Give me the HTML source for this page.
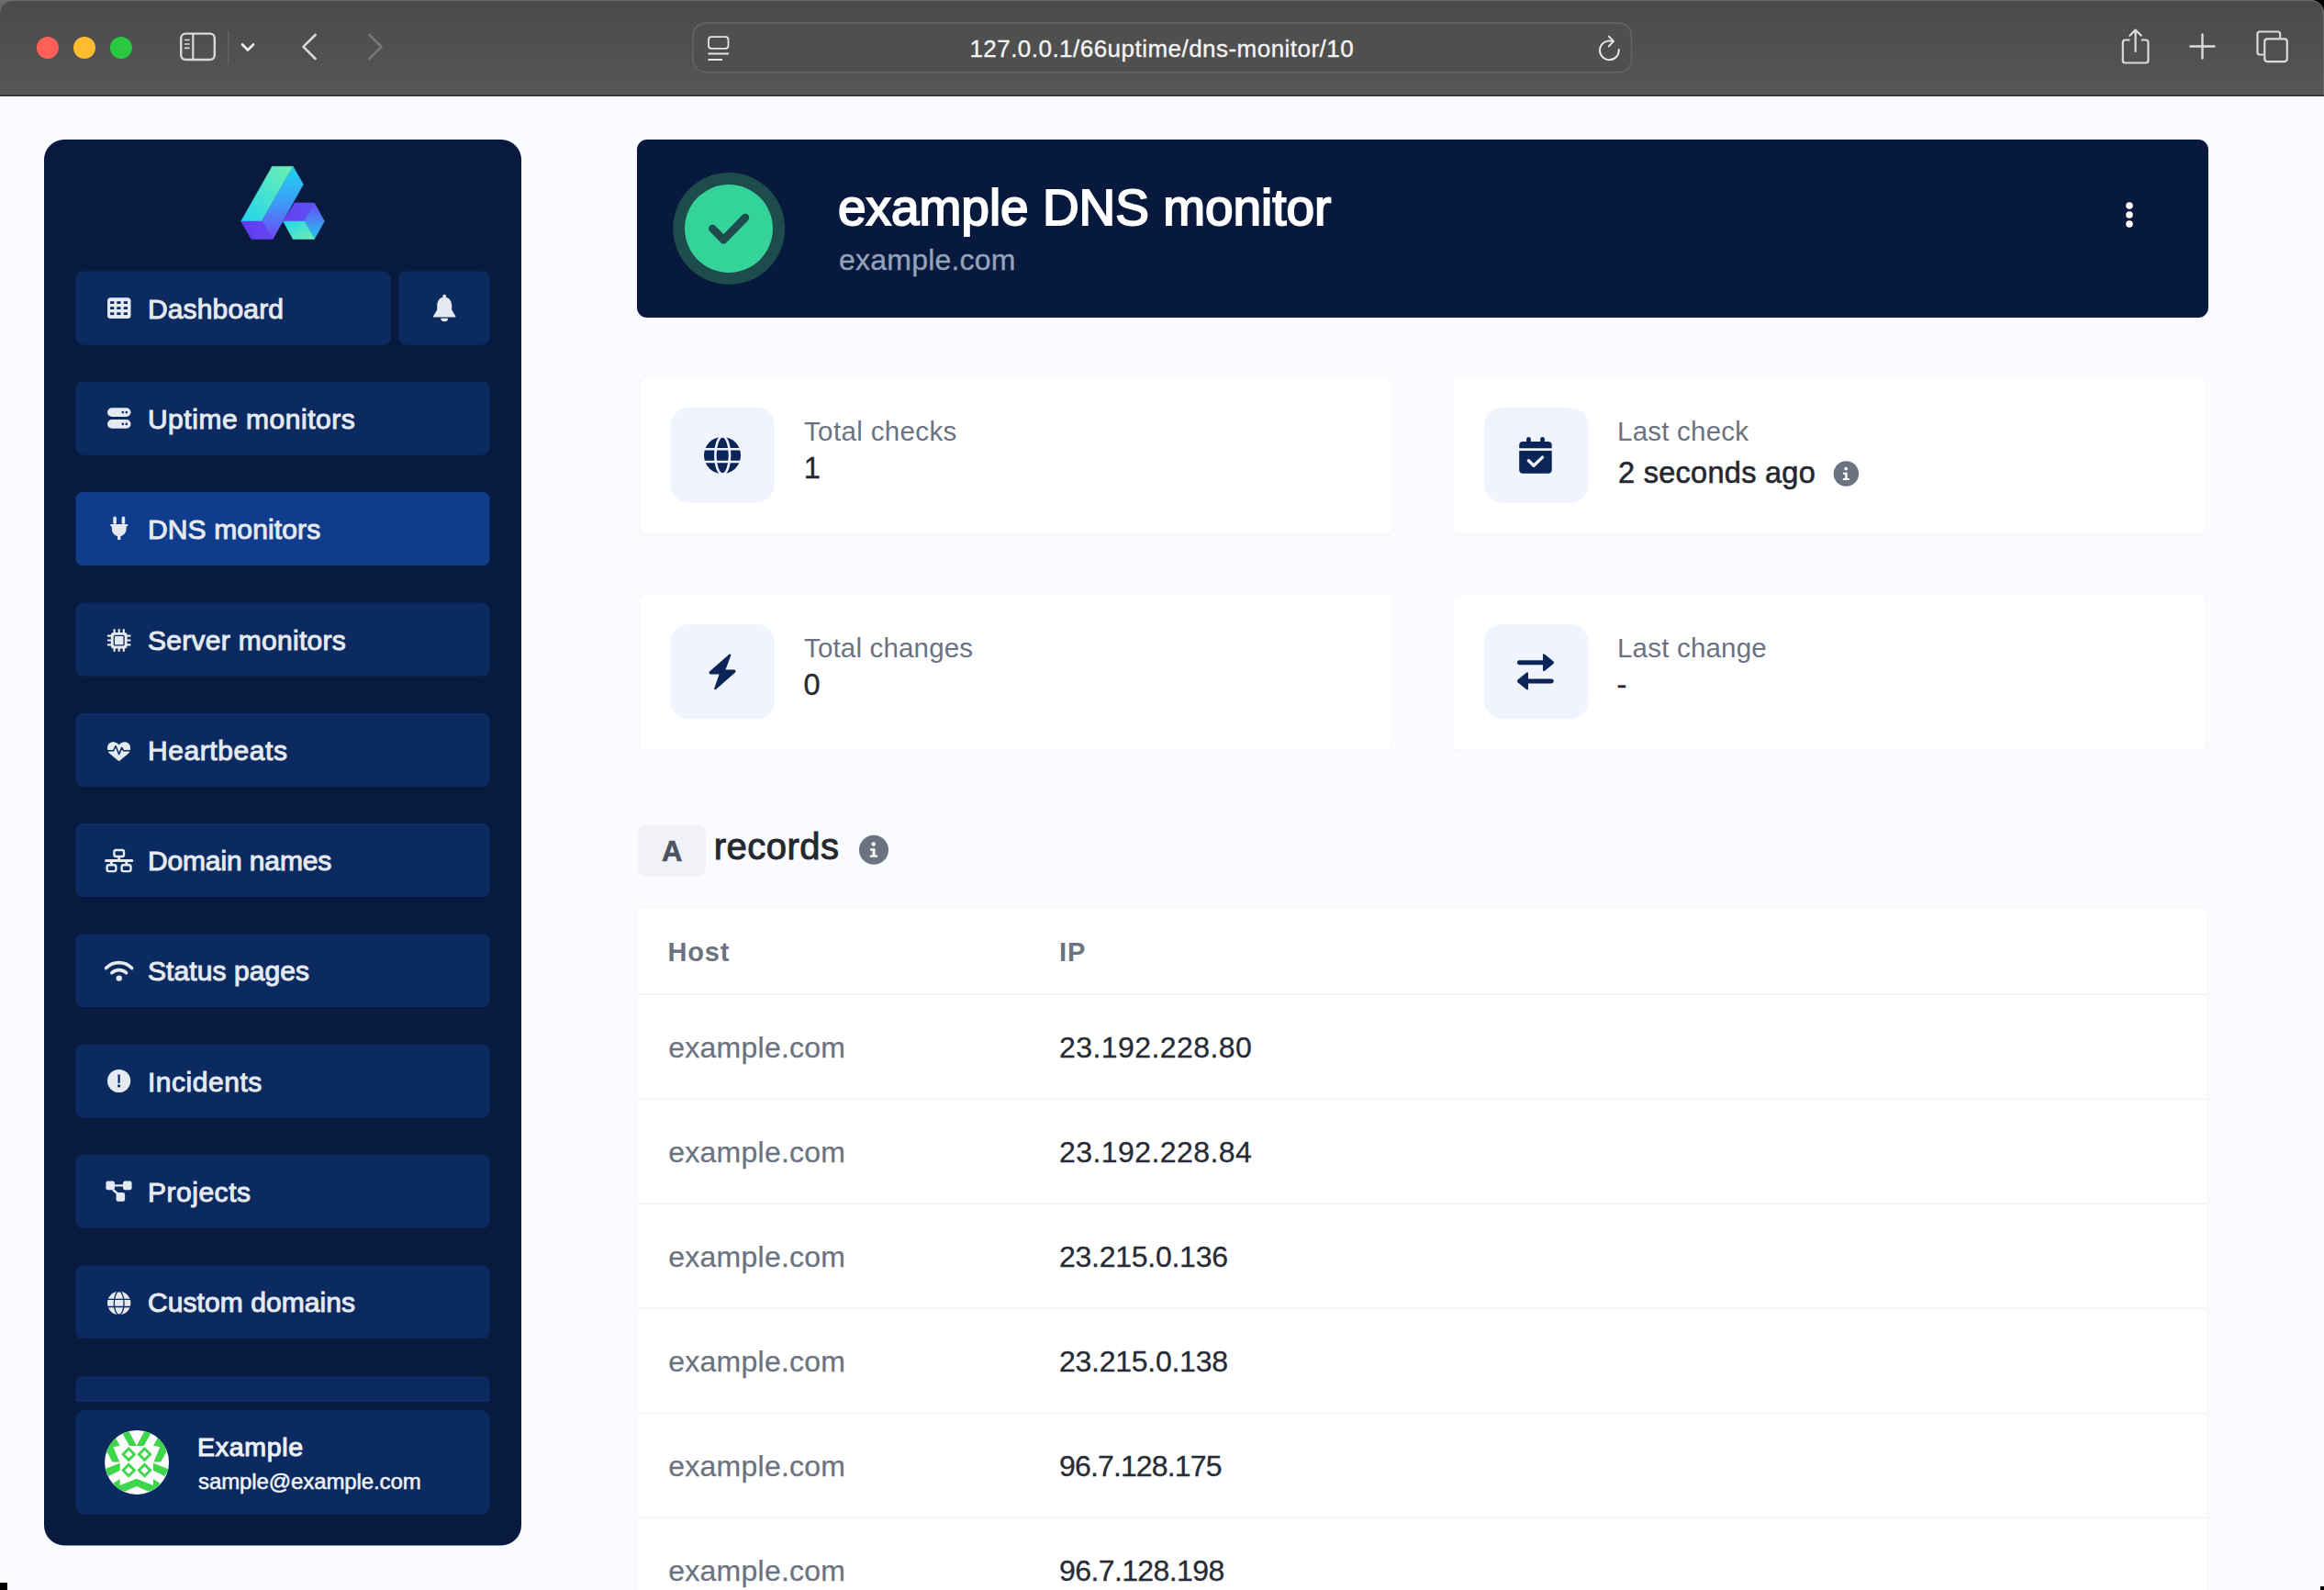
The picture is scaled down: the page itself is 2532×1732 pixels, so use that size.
<!DOCTYPE html>
<html><head><meta charset="utf-8"><title>example DNS monitor</title>
<style>
html,body{margin:0;padding:0;width:2532px;height:1732px;overflow:hidden;background:#fafbfe}
.ov{position:absolute;left:0;top:0}
.t{position:absolute;white-space:nowrap;font-family:"Liberation Sans", sans-serif}
</style></head><body>
<svg class="ov" width="2532" height="1732" viewBox="0 0 2532 1732"><defs><linearGradient id="tb" x1="0" y1="0" x2="0" y2="1"><stop offset="0" stop-color="#4a4a4a"/><stop offset="1" stop-color="#565656"/></linearGradient><linearGradient id="lg1" x1="0" y1="1" x2="1" y2="0"><stop offset="0" stop-color="#22d3ee"/><stop offset="1" stop-color="#6ef0b0"/></linearGradient><linearGradient id="lg2" x1="0" y1="0" x2="0" y2="1"><stop offset="0" stop-color="#22d3ee"/><stop offset="0.5" stop-color="#3b9cf6"/><stop offset="1" stop-color="#7047f5"/></linearGradient><linearGradient id="lg3" x1="0" y1="0" x2="1" y2="0"><stop offset="0" stop-color="#5b3cf0"/><stop offset="1" stop-color="#6a44f6"/></linearGradient><linearGradient id="lg4" x1="0" y1="0" x2="1" y2="0"><stop offset="0" stop-color="#6a3ef2"/><stop offset="1" stop-color="#5a52f4"/></linearGradient><linearGradient id="lg5" x1="0" y1="0" x2="0" y2="1"><stop offset="0" stop-color="#6a4af6"/><stop offset="1" stop-color="#22c8ee"/></linearGradient><linearGradient id="lg6" x1="0" y1="0" x2="1" y2="1"><stop offset="0" stop-color="#22d3ee"/><stop offset="1" stop-color="#6ef0b0"/></linearGradient><clipPath id="avc"><circle cx="149.1" cy="1592.9" r="35"/></clipPath></defs><rect x="0" y="0" width="2532" height="104" fill="#6a6a6a"/><path d="M0,104 V16 Q0,1 16,1 H2516 Q2531,1 2531,16 V104 Z" fill="url(#tb)"/><path d="M2520,0 H2532 V12 Q2530,2 2520,0 Z" fill="#000"/><rect x="0" y="102.5" width="2532" height="1.2" fill="#5c5c5c"/><rect x="0" y="103.7" width="2532" height="1.2" fill="#000"/><circle cx="51.9" cy="51.9" r="12" fill="#fe5f57"/><circle cx="92" cy="51.9" r="12" fill="#febc2e"/><circle cx="131.9" cy="51.9" r="12" fill="#28c840"/><rect x="197.2" y="36.6" width="36.6" height="28.4" rx="5" fill="none" stroke="#d8d8d8" stroke-width="2.4"/><line x1="210.3" y1="37" x2="210.3" y2="65" stroke="#d8d8d8" stroke-width="2.2"/><path d="M201.6,43.5 H206 M201.6,48 H206 M201.6,52.4 H206" stroke="#d8d8d8" stroke-width="1.7" stroke-linecap="round"/><line x1="248.9" y1="34" x2="248.9" y2="70.6" stroke="#656565" stroke-width="1.3"/><path d="M264,48.5 L270,54.5 L276,48.5" fill="none" stroke="#f0f0f0" stroke-width="2.6" stroke-linecap="round" stroke-linejoin="round"/><path d="M343.6,38 L330.4,50.9 L343.6,64" fill="none" stroke="#d8d8d8" stroke-width="2.6" stroke-linecap="round" stroke-linejoin="round"/><path d="M402.4,38 L415.6,51 L402.4,64" fill="none" stroke="#777" stroke-width="2.6" stroke-linecap="round" stroke-linejoin="round"/><rect x="755" y="25" width="1022.5" height="53.8" rx="14" fill="#4f4f4f" stroke="#656565" stroke-width="1.5"/><rect x="772" y="40.2" width="21.5" height="12.6" rx="3" fill="none" stroke="#e6e6e6" stroke-width="1.8"/><path d="M771.5,58.5 H794 M771.5,65 H787" stroke="#e6e6e6" stroke-width="1.8"/><path d="M1763.7,53.9 A10.36,10.36 0 1,1 1756.4,44.9" fill="none" stroke="#e8e8e8" stroke-width="2" stroke-linecap="round"/><path d="M1752.8,39.6 L1758,44.9 L1752.8,50.4" fill="none" stroke="#e8e8e8" stroke-width="2" stroke-linecap="round" stroke-linejoin="round"/><path d="M2320.5,43.5 H2315.5 Q2312.8,43.5 2312.8,46.2 V66 Q2312.8,68.5 2315.5,68.5 H2337.8 Q2340.5,68.5 2340.5,66 V46.2 Q2340.5,43.5 2337.8,43.5 H2332.8" fill="none" stroke="#dcdcdc" stroke-width="2.2"/><path d="M2326.6,56 V33 M2320.5,38.8 L2326.6,32.6 L2332.8,38.8" fill="none" stroke="#dcdcdc" stroke-width="2.2" stroke-linecap="round" stroke-linejoin="round"/><path d="M2399.5,37.5 V63.5 M2386.5,50.5 H2412.5" stroke="#dcdcdc" stroke-width="2.4" stroke-linecap="round"/><path d="M2466.3,59.5 H2462 Q2459.5,59.5 2459.5,57 V37 Q2459.5,34.5 2462,34.5 H2481.5 Q2484.2,34.5 2484.2,37 V41.2" fill="none" stroke="#dcdcdc" stroke-width="2.2"/><rect x="2467.3" y="42.3" width="24.5" height="24.8" rx="3" fill="none" stroke="#dcdcdc" stroke-width="2.2"/><rect x="0" y="104.9" width="2532" height="1628" fill="#fafbfe"/><path d="M0,1724 H8 V1732 H0 Z" fill="#000"/><path d="M2528,1728 H2532 V1732 H2528 Z" fill="#000"/><rect x="48" y="152" width="520" height="1531.5" rx="22" fill="#081a3e"/><polygon points="296.5,181.3 319.2,181.3 285.2,241.1 262.6,241.1" fill="url(#lg1)" stroke="url(#lg1)" stroke-width="0.5" stroke-linejoin="round"/><polygon points="319.2,181.3 330.5,200.8 297.2,260.6 285.2,241.1" fill="url(#lg2)" stroke="url(#lg2)" stroke-width="0.5" stroke-linejoin="round"/><polygon points="262.6,241.1 285.2,241.1 297.2,260.6 273.9,260.6" fill="url(#lg3)" stroke="url(#lg3)" stroke-width="0.5" stroke-linejoin="round"/><polygon points="321.1,221 342.5,221 331.5,241.1 308.5,241.1" fill="url(#lg4)" stroke="url(#lg4)" stroke-width="0.5" stroke-linejoin="round"/><polygon points="342.5,221 353.5,241.1 342.5,260.6 331.5,241.1" fill="url(#lg5)" stroke="url(#lg5)" stroke-width="0.5" stroke-linejoin="round"/><polygon points="308.5,241.1 331.5,241.1 342.5,260.6 319.2,260.6" fill="url(#lg6)" stroke="url(#lg6)" stroke-width="0.5" stroke-linejoin="round"/><rect x="82.5" y="295.5" width="343.2" height="80.3" rx="7.5" fill="#0a2a60"/><rect x="434.3" y="295.5" width="99.3" height="80.3" rx="7.5" fill="#0a2a60"/><rect x="82.5" y="415.8" width="451" height="80" rx="7.5" fill="#0a2a60"/><rect x="82.5" y="536.1" width="451" height="80" rx="7.5" fill="#0f3c8b"/><rect x="82.5" y="656.4" width="451" height="80" rx="7.5" fill="#0a2a60"/><rect x="82.5" y="776.7" width="451" height="80" rx="7.5" fill="#0a2a60"/><rect x="82.5" y="897.0" width="451" height="80" rx="7.5" fill="#0a2a60"/><rect x="82.5" y="1017.3" width="451" height="80" rx="7.5" fill="#0a2a60"/><rect x="82.5" y="1137.6" width="451" height="80" rx="7.5" fill="#0a2a60"/><rect x="82.5" y="1257.9" width="451" height="80" rx="7.5" fill="#0a2a60"/><rect x="82.5" y="1378.2" width="451" height="80" rx="7.5" fill="#0a2a60"/><path d="M82.5,1527.3 V1508.2 Q82.5,1499.2 91.5,1499.2 H524.5 Q533.5,1499.2 533.5,1508.2 V1527.3 Z" fill="#0a2a60"/><rect x="82.5" y="1536" width="451" height="114" rx="10" fill="#0a2a60"/><rect x="117" y="324.2" width="25.5" height="22.8" rx="3.5" fill="#e5e9f0"/><rect x="120.1" y="328.2" width="4.2" height="2.8" fill="#0a2a60"/><rect x="120.1" y="334.2" width="4.2" height="2.8" fill="#0a2a60"/><rect x="120.1" y="340.3" width="4.2" height="2.8" fill="#0a2a60"/><rect x="127.3" y="328.2" width="4.2" height="2.8" fill="#0a2a60"/><rect x="127.3" y="334.2" width="4.2" height="2.8" fill="#0a2a60"/><rect x="127.3" y="340.3" width="4.2" height="2.8" fill="#0a2a60"/><rect x="134.8" y="328.2" width="4.2" height="2.8" fill="#0a2a60"/><rect x="134.8" y="334.2" width="4.2" height="2.8" fill="#0a2a60"/><rect x="134.8" y="340.3" width="4.2" height="2.8" fill="#0a2a60"/><rect x="117" y="444.2" width="25.5" height="9.8" rx="4.9" fill="#e5e9f0"/><rect x="117" y="457" width="25.5" height="9.8" rx="4.9" fill="#e5e9f0"/><circle cx="133.8" cy="449.1" r="1.3" fill="#0a2a60"/><circle cx="137.8" cy="449.1" r="1.3" fill="#0a2a60"/><circle cx="133.8" cy="461.9" r="1.3" fill="#0a2a60"/><circle cx="137.8" cy="461.9" r="1.3" fill="#0a2a60"/><rect x="123.3" y="562.6" width="3.6" height="8.5" rx="1.8" fill="#e5e9f0"/><rect x="132.6" y="562.6" width="3.6" height="8.5" rx="1.8" fill="#e5e9f0"/><path d="M121,571 H138.5 Q139.8,571 139.3,572.5 L137.6,574 V576.5 Q137.3,582.5 131.3,584.2 V588 H128.1 V584.2 Q122.1,582.5 121.9,576.5 V574 L120.2,572.5 Q119.7,571 121,571 Z" fill="#e5e9f0"/><rect x="120.8" y="689" width="17.8" height="17.6" rx="3" fill="#e5e9f0"/><rect x="123.5" y="685" width="2.2" height="5" rx="1" fill="#e5e9f0"/><rect x="123.5" y="705.5" width="2.2" height="4.6" rx="1" fill="#e5e9f0"/><rect x="128.6" y="685" width="2.2" height="5" rx="1" fill="#e5e9f0"/><rect x="128.6" y="705.5" width="2.2" height="4.6" rx="1" fill="#e5e9f0"/><rect x="133.7" y="685" width="2.2" height="5" rx="1" fill="#e5e9f0"/><rect x="133.7" y="705.5" width="2.2" height="4.6" rx="1" fill="#e5e9f0"/><rect x="116.8" y="691.5" width="5" height="2.2" rx="1" fill="#e5e9f0"/><rect x="137.6" y="691.5" width="5" height="2.2" rx="1" fill="#e5e9f0"/><rect x="116.8" y="696.4" width="5" height="2.2" rx="1" fill="#e5e9f0"/><rect x="137.6" y="696.4" width="5" height="2.2" rx="1" fill="#e5e9f0"/><rect x="116.8" y="701.3" width="5" height="2.2" rx="1" fill="#e5e9f0"/><rect x="137.6" y="701.3" width="5" height="2.2" rx="1" fill="#e5e9f0"/><rect x="124.3" y="692.3" width="10.8" height="10.6" rx="1.2" fill="#e5e9f0" stroke="#0a2a60" stroke-width="1.3"/><path d="M129.6,811.6 C127.3,806.9 117,806 117,815.2 C117,817.4 117.9,819.4 119.5,820.9 L129.6,829.2 L139.7,820.9 C141.3,819.4 142.1,817.4 142.1,815.2 C142.1,806 131.9,806.9 129.6,811.6 Z" fill="#e5e9f0"/><path d="M116.5,817.7 H123.6 L126.1,812.7 L129.6,821.6 L132.7,814.4 L134.6,817.7 H142.5" fill="none" stroke="#0a2a60" stroke-width="1.5" stroke-linejoin="round"/><rect x="124.4" y="926" width="10.6" height="7" rx="2" fill="none" stroke="#e5e9f0" stroke-width="2.4"/><rect x="128.4" y="933" width="2.6" height="4" fill="#e5e9f0"/><rect x="114" y="936" width="31.3" height="3" rx="1.5" fill="#e5e9f0"/><rect x="119.9" y="938" width="2.9" height="4" fill="#e5e9f0"/><rect x="136.4" y="938" width="2.9" height="4" fill="#e5e9f0"/><rect x="116.6" y="942.2" width="9.8" height="6.9" rx="2" fill="none" stroke="#e5e9f0" stroke-width="2.4"/><rect x="132.6" y="942.2" width="9.9" height="6.9" rx="2" fill="none" stroke="#e5e9f0" stroke-width="2.4"/><path d="M115.6,1054.6 A19.5,19.5 0 0,1 143.6,1054.6" fill="none" stroke="#e5e9f0" stroke-width="3.6" stroke-linecap="round"/><path d="M121.8,1059.8 A11.5,11.5 0 0,1 137.6,1059.8" fill="none" stroke="#e5e9f0" stroke-width="3.6" stroke-linecap="round"/><circle cx="129.7" cy="1065.6" r="3.2" fill="#e5e9f0"/><circle cx="129.6" cy="1177.5" r="12.6" fill="#e5e9f0"/><path d="M129.6,1171.5 V1179" stroke="#0a2a60" stroke-width="2.3" stroke-linecap="round"/><circle cx="129.6" cy="1182.9" r="1.55" fill="#0a2a60"/><path d="M124,1291.4 H135 M123,1296 L128.5,1300.5" stroke="#e5e9f0" stroke-width="2.4"/><rect x="115.4" y="1286.6" width="9.6" height="9.6" rx="2.2" fill="#e5e9f0"/><rect x="134" y="1286.6" width="9.6" height="9.6" rx="2.2" fill="#e5e9f0"/><rect x="126.5" y="1299" width="9.6" height="9.8" rx="2.2" fill="#e5e9f0"/><circle cx="129.7" cy="1419.4" r="12.7" fill="#e5e9f0"/><ellipse cx="129.7" cy="1419.4" rx="5.4" ry="12.7" fill="none" stroke="#0a2a60" stroke-width="1.3"/><path d="M116,1415.3 H143.5 M116,1423.5 H143.5" stroke="#0a2a60" stroke-width="1.3"/><circle cx="484.2" cy="322.6" r="1.9" fill="#e5e9f0"/><path d="M484.2,323.6 C478.6,323.6 476.2,328.8 476.2,333 V337.5 L472,344.6 Q471.5,345.6 472.6,345.6 H495.8 Q496.9,345.6 496.4,344.6 L492.2,337.5 V333 C492.2,328.8 489.8,323.6 484.2,323.6 Z" fill="#e5e9f0"/><path d="M480.2,346.8 A4,3.4 0 0,0 488.2,346.8 Z" fill="#e5e9f0"/><g clip-path="url(#avc)"><g transform="translate(108,1552) scale(0.051572)"><rect x="0" y="0" width="1590" height="1590" fill="#fff"/><polygon points="457,122 620,122 792,445 640,445" fill="#3ed64b"/><polygon points="1127,122 964,122 792,445 944,445" fill="#3ed64b"/><polygon points="300,200 440,440 300,470 430,785 280,785 110,470" fill="#3ed64b"/><polygon points="1284,200 1144,440 1284,470 1154,785 1304,785 1474,470" fill="#3ed64b"/><polygon points="440,810 440,965 200,1085 110,940" fill="#3ed64b"/><polygon points="1144,810 1144,965 1384,1085 1474,940" fill="#3ed64b"/><polygon points="300,1230 440,1150 440,1280 792,1140 1144,1280 1144,1150 1284,1230 1250,1340 1040,1410 792,1300 544,1410 334,1340" fill="#3ed64b"/><polygon points="467,625 625,467 783,625 625,783" fill="#3ed64b"/><polygon points="545,625 625,545 705,625 625,705" fill="#fff"/><polygon points="802,625 960,467 1118,625 960,783" fill="#3ed64b"/><polygon points="880,625 960,545 1040,625 960,705" fill="#fff"/><polygon points="467,960 625,802 783,960 625,1118" fill="#3ed64b"/><polygon points="545,960 625,880 705,960 625,1040" fill="#fff"/><polygon points="802,960 960,802 1118,960 960,1118" fill="#3ed64b"/><polygon points="880,960 960,880 1040,960 960,1040" fill="#fff"/></g></g><rect x="694" y="152" width="1712" height="194" rx="11" fill="#08193e"/><circle cx="794.2" cy="249" r="61" fill="#1e4b4b"/><circle cx="794" cy="249" r="48" fill="#34d399"/><path d="M776.3,249 L788.3,261.3 L812,237" fill="none" stroke="#1e4b4b" stroke-width="8.6" stroke-linecap="round" stroke-linejoin="round"/><circle cx="2320" cy="224" r="3.8" fill="#fff"/><circle cx="2320" cy="234" r="3.8" fill="#fff"/><circle cx="2320" cy="244" r="3.8" fill="#fff"/><rect x="696.0" y="411.1" width="821.9" height="172.9" rx="7" fill="#f7f8fb"/><rect x="697.5" y="412.6" width="818.9" height="167.9" rx="5.5" fill="#ffffff"/><rect x="730.5" y="443.8" width="113.5" height="103.6" rx="20" fill="#eff4fe"/><rect x="1582.5" y="411.1" width="821.9" height="172.9" rx="7" fill="#f7f8fb"/><rect x="1584" y="412.6" width="818.9" height="167.9" rx="5.5" fill="#ffffff"/><rect x="1617" y="443.8" width="113.5" height="103.6" rx="20" fill="#eff4fe"/><rect x="696.0" y="647.0" width="821.9" height="172.9" rx="7" fill="#f7f8fb"/><rect x="697.5" y="648.5" width="818.9" height="167.9" rx="5.5" fill="#ffffff"/><rect x="730.5" y="679.7" width="113.5" height="103.6" rx="20" fill="#eff4fe"/><rect x="1582.5" y="647.0" width="821.9" height="172.9" rx="7" fill="#f7f8fb"/><rect x="1584" y="648.5" width="818.9" height="167.9" rx="5.5" fill="#ffffff"/><rect x="1617" y="679.7" width="113.5" height="103.6" rx="20" fill="#eff4fe"/><circle cx="787" cy="496" r="20" fill="#0b2559"/><ellipse cx="787.2" cy="496" rx="7.9" ry="20.5" fill="none" stroke="#eff4fe" stroke-width="2.6"/><path d="M765,489.3 H809 M765,503 H809" stroke="#eff4fe" stroke-width="2.6"/><rect x="1663.1" y="476" width="4.7" height="9" rx="2.35" fill="#0b2559"/><rect x="1678.2" y="476" width="4.7" height="9" rx="2.35" fill="#0b2559"/><path d="M1655.2,488.3 V485 Q1655.2,480.9 1659.3,480.9 H1686.6 Q1690.7,480.9 1690.7,485 V488.3 Z" fill="#0b2559"/><path d="M1655.2,491.1 H1690.7 V511.7 Q1690.7,515.8 1686.6,515.8 H1659.3 Q1655.2,515.8 1655.2,511.7 Z" fill="#0b2559"/><path d="M1665.4,501.8 L1671,507.3 L1680.5,498.1" fill="none" stroke="#eff4fe" stroke-width="3.4" stroke-linecap="round" stroke-linejoin="round"/><path d="M794.7,712.6 Q796.5,712 796.3,714 L790.5,729.6 H800 Q802.5,730.3 801,732.5 L780,751 Q777.6,752 778.3,749.5 L783.6,734.4 H774.2 Q771.5,733.6 773,731.5 Z" fill="#0b2559"/><path d="M1655.3,721.8 H1683 M1690.3,742 H1664" stroke="#0b2559" stroke-width="4.9" stroke-linecap="round"/><path d="M1681,713.5 Q1681,711.5 1683,712.8 L1692.5,720.5 Q1693.5,721.8 1692.5,723.1 L1683,730.8 Q1681,732 1681,730 Z" fill="#0b2559"/><path d="M1665,733.5 Q1665,731.5 1663,732.8 L1653.5,740.5 Q1652.5,741.9 1653.5,743.2 L1663,750.9 Q1665,752.2 1665,750 Z" fill="#0b2559"/><circle cx="2011.4" cy="516" r="13.75" fill="#6b7280"/><circle cx="2011.20" cy="510.60" r="1.90" fill="#fff"/><path d="M2008.10,514.80 H2012.70 V521.00 H2014.90 V523.00 H2007.90 V521.00 H2010.20 V516.80 H2008.10 Z" fill="#fff"/><circle cx="952" cy="925.7" r="16" fill="#6b7280"/><circle cx="951.77" cy="919.42" r="2.21" fill="#fff"/><path d="M948.16,924.30 H953.51 V931.52 H956.07 V933.85 H947.93 V931.52 H950.60 V926.63 H948.16 Z" fill="#fff"/><rect x="694.5" y="898.2" width="74.5" height="56.4" rx="9" fill="#f1f2f5"/><rect x="693" y="987.5" width="1712.5" height="760" rx="7" fill="#f7f8fb"/><rect x="694.5" y="989" width="1709.5" height="760" rx="5.5" fill="#ffffff"/><rect x="695" y="1082.4" width="1709" height="1.6" fill="#f2f3f5"/><rect x="695" y="1196.4" width="1709" height="1.6" fill="#f2f3f5"/><rect x="695" y="1310.5" width="1709" height="1.6" fill="#f2f3f5"/><rect x="695" y="1424.5" width="1709" height="1.6" fill="#f2f3f5"/><rect x="695" y="1538.6" width="1709" height="1.6" fill="#f2f3f5"/><rect x="695" y="1652.6" width="1709" height="1.6" fill="#f2f3f5"/></svg>
<div class="t" style="left:1056.4px;top:39.6px;font-size:26px;line-height:26px;font-weight:400;color:#f4f4f4;letter-spacing:0.47px;-webkit-text-stroke:0.35px #f4f4f4">127.0.0.1/66uptime/dns-monitor/10</div><div class="t" style="left:160.9px;top:321.6px;font-size:30px;line-height:30px;font-weight:400;color:#e5e9f0;letter-spacing:0.17px;-webkit-text-stroke:1.0px #e5e9f0">Dashboard</div><div class="t" style="left:160.9px;top:441.9px;font-size:30px;line-height:30px;font-weight:400;color:#e5e9f0;letter-spacing:0.54px;-webkit-text-stroke:1.0px #e5e9f0">Uptime monitors</div><div class="t" style="left:160.9px;top:562.2px;font-size:30px;line-height:30px;font-weight:400;color:#e5e9f0;letter-spacing:0.15px;-webkit-text-stroke:1.0px #e5e9f0">DNS monitors</div><div class="t" style="left:160.9px;top:682.5px;font-size:30px;line-height:30px;font-weight:400;color:#e5e9f0;letter-spacing:0.30px;-webkit-text-stroke:1.0px #e5e9f0">Server monitors</div><div class="t" style="left:160.9px;top:802.8px;font-size:30px;line-height:30px;font-weight:400;color:#e5e9f0;letter-spacing:0.59px;-webkit-text-stroke:1.0px #e5e9f0">Heartbeats</div><div class="t" style="left:160.9px;top:923.1px;font-size:30px;line-height:30px;font-weight:400;color:#e5e9f0;letter-spacing:-0.12px;-webkit-text-stroke:1.0px #e5e9f0">Domain names</div><div class="t" style="left:160.9px;top:1043.4px;font-size:30px;line-height:30px;font-weight:400;color:#e5e9f0;letter-spacing:0.10px;-webkit-text-stroke:1.0px #e5e9f0">Status pages</div><div class="t" style="left:160.9px;top:1163.7px;font-size:30px;line-height:30px;font-weight:400;color:#e5e9f0;letter-spacing:0.54px;-webkit-text-stroke:1.0px #e5e9f0">Incidents</div><div class="t" style="left:160.9px;top:1284.0px;font-size:30px;line-height:30px;font-weight:400;color:#e5e9f0;letter-spacing:0.54px;-webkit-text-stroke:1.0px #e5e9f0">Projects</div><div class="t" style="left:160.9px;top:1404.3px;font-size:30px;line-height:30px;font-weight:400;color:#e5e9f0;letter-spacing:0.08px;-webkit-text-stroke:1.0px #e5e9f0">Custom domains</div><div class="t" style="left:215.0px;top:1562.4px;font-size:28.5px;line-height:28.5px;font-weight:400;color:#eef1f6;letter-spacing:0.70px;-webkit-text-stroke:1.1px #eef1f6">Example</div><div class="t" style="left:216.0px;top:1602.2px;font-size:24px;line-height:24px;font-weight:400;color:#eef1f6;letter-spacing:-0.10px;-webkit-text-stroke:0.55px #eef1f6">sample@example.com</div><div class="t" style="left:913.0px;top:198.9px;font-size:55px;line-height:55px;font-weight:400;color:#ffffff;letter-spacing:-0.03px;-webkit-text-stroke:1.9px #ffffff">example DNS monitor</div><div class="t" style="left:914.0px;top:266.9px;font-size:32px;line-height:32px;font-weight:400;color:#94a3b8;letter-spacing:0.22px;-webkit-text-stroke:0.35px #94a3b8">example.com</div><div class="t" style="left:876.0px;top:455.0px;font-size:29.5px;line-height:29.5px;font-weight:400;color:#6b7280;letter-spacing:0.36px">Total checks</div><div class="t" style="left:875.7px;top:494.4px;font-size:32.5px;line-height:32.5px;font-weight:400;color:#25282e;letter-spacing:0.00px;-webkit-text-stroke:0.4px #25282e">1</div><div class="t" style="left:1762.0px;top:454.6px;font-size:29.5px;line-height:29.5px;font-weight:400;color:#6b7280;letter-spacing:0.22px">Last check</div><div class="t" style="left:1763.0px;top:499.0px;font-size:32.5px;line-height:32.5px;font-weight:400;color:#25282e;letter-spacing:0.28px;-webkit-text-stroke:0.6px #25282e">2 seconds ago</div><div class="t" style="left:876.0px;top:691.0px;font-size:29.5px;line-height:29.5px;font-weight:400;color:#6b7280;letter-spacing:0.17px">Total changes</div><div class="t" style="left:875.5px;top:730.2px;font-size:32.5px;line-height:32.5px;font-weight:400;color:#25282e;letter-spacing:0.00px;-webkit-text-stroke:0.4px #25282e">0</div><div class="t" style="left:1762.0px;top:691.0px;font-size:29.5px;line-height:29.5px;font-weight:400;color:#6b7280;letter-spacing:0.20px">Last change</div><div class="t" style="left:1761.5px;top:730.2px;font-size:32.5px;line-height:32.5px;font-weight:400;color:#25282e;letter-spacing:0.00px;-webkit-text-stroke:0.4px #25282e">-</div><div class="t" style="left:721.0px;top:911.8px;font-size:31px;line-height:31px;font-weight:700;color:#4b5563;letter-spacing:0.00px;-webkit-text-stroke:0.6px #4b5563">A</div><div class="t" style="left:777.8px;top:902.4px;font-size:40px;line-height:40px;font-weight:400;color:#25282e;letter-spacing:0.45px;-webkit-text-stroke:1.0px #25282e">records</div><div class="t" style="left:727.5px;top:1022.8px;font-size:29px;line-height:29px;font-weight:700;color:#6b7280;letter-spacing:0.80px">Host</div><div class="t" style="left:1154.0px;top:1022.8px;font-size:29px;line-height:29px;font-weight:700;color:#6b7280;letter-spacing:0.90px">IP</div><div class="t" style="left:728.3px;top:1124.7px;font-size:32px;line-height:32px;font-weight:400;color:#6b7280;letter-spacing:0.24px;-webkit-text-stroke:0.25px #6b7280">example.com</div><div class="t" style="left:1154.0px;top:1124.7px;font-size:32px;line-height:32px;font-weight:400;color:#262b35;letter-spacing:0.43px;-webkit-text-stroke:0.3px #262b35">23.192.228.80</div><div class="t" style="left:728.3px;top:1238.8px;font-size:32px;line-height:32px;font-weight:400;color:#6b7280;letter-spacing:0.24px;-webkit-text-stroke:0.25px #6b7280">example.com</div><div class="t" style="left:1154.0px;top:1238.8px;font-size:32px;line-height:32px;font-weight:400;color:#262b35;letter-spacing:0.43px;-webkit-text-stroke:0.3px #262b35">23.192.228.84</div><div class="t" style="left:728.3px;top:1352.8px;font-size:32px;line-height:32px;font-weight:400;color:#6b7280;letter-spacing:0.24px;-webkit-text-stroke:0.25px #6b7280">example.com</div><div class="t" style="left:1154.0px;top:1352.8px;font-size:32px;line-height:32px;font-weight:400;color:#262b35;letter-spacing:-0.26px;-webkit-text-stroke:0.3px #262b35">23.215.0.136</div><div class="t" style="left:728.3px;top:1466.8px;font-size:32px;line-height:32px;font-weight:400;color:#6b7280;letter-spacing:0.24px;-webkit-text-stroke:0.25px #6b7280">example.com</div><div class="t" style="left:1154.0px;top:1466.8px;font-size:32px;line-height:32px;font-weight:400;color:#262b35;letter-spacing:-0.26px;-webkit-text-stroke:0.3px #262b35">23.215.0.138</div><div class="t" style="left:728.3px;top:1580.9px;font-size:32px;line-height:32px;font-weight:400;color:#6b7280;letter-spacing:0.24px;-webkit-text-stroke:0.25px #6b7280">example.com</div><div class="t" style="left:1154.0px;top:1580.9px;font-size:32px;line-height:32px;font-weight:400;color:#262b35;letter-spacing:-0.85px;-webkit-text-stroke:0.3px #262b35">96.7.128.175</div><div class="t" style="left:728.3px;top:1694.9px;font-size:32px;line-height:32px;font-weight:400;color:#6b7280;letter-spacing:0.24px;-webkit-text-stroke:0.25px #6b7280">example.com</div><div class="t" style="left:1154.0px;top:1694.9px;font-size:32px;line-height:32px;font-weight:400;color:#262b35;letter-spacing:-0.60px;-webkit-text-stroke:0.3px #262b35">96.7.128.198</div>
</body></html>
